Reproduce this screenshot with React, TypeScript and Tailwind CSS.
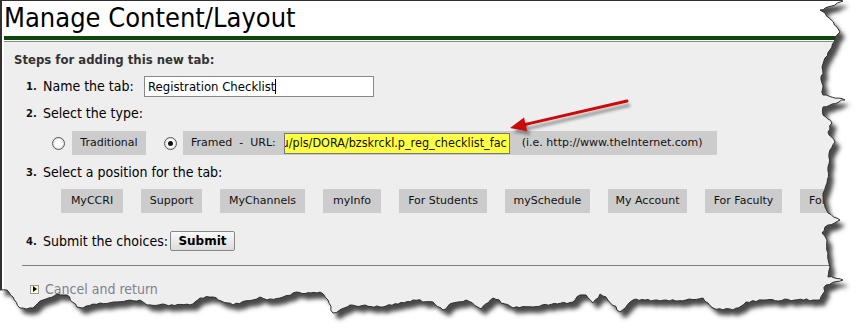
import React from "react";

const F = { fontFamily: '"DejaVu Sans Condensed", "DejaVu Sans", sans-serif' };
const V = { fontFamily: '"DejaVu Sans", sans-serif' };

const pts: [number, number][] = [
  [0, 0], [840, 0], [843, 1], [820, 10], [825, 13], [837, 27], [840, 32], [835, 38], [830, 50], [825, 58], [822, 67], [822, 83], [823, 95], [845, 100], [823, 107], [823, 115], [832, 123], [828, 132], [835, 142], [830, 150], [828, 167], [827, 183], [823, 197], [825, 207], [828, 213], [840, 220], [825, 227], [822, 233], [827, 240], [828, 253], [830, 267], [828, 277], [843, 280], [826, 285], [820, 300], [813, 300], [766, 300], [746, 302], [733, 310], [713, 308], [703, 298], [686, 300], [666, 300], [633, 300], [620, 312], [606, 297], [600, 294], [593, 303], [586, 295], [580, 295], [573, 302], [533, 307], [513, 308], [493, 298], [481, 309], [466, 300], [453, 303], [443, 310], [433, 302], [413, 300], [383, 307], [350, 305], [333, 313], [328, 300], [320, 292], [293, 293], [283, 297], [267, 300], [260, 297], [253, 300], [233, 305], [213, 297], [200, 298], [190, 305], [147, 305], [140, 300], [117, 302], [100, 303], [83, 308], [77, 307], [67, 295], [57, 294], [43, 300], [33, 308], [20, 308], [13, 297], [7, 290], [0, 290],
];

function buildPath(): string {
  let seed = 7;
  const rnd = () => {
    seed = (seed * 9301 + 49297) % 233280;
    return seed / 233280 - 0.5;
  };
  const out: string[] = [];
  for (let i = 0; i < pts.length; i++) {
    const [x1, y1] = pts[i];
    const [x2, y2] = pts[(i + 1) % pts.length];
    out.push(`${x1},${y1}`);
    const len = Math.hypot(x2 - x1, y2 - y1);
    const onBorder = (y1 === 0 && y2 === 0) || (x1 === 0 && x2 === 0);
    if (onBorder) continue;
    const steps = Math.floor(len / 3);
    for (let s = 1; s < steps; s++) {
      const t = s / steps;
      const nx = -(y2 - y1) / len;
      const ny = (x2 - x1) / len;
      const j = rnd() * 2.2;
      out.push(`${(x1 + (x2 - x1) * t + nx * j).toFixed(1)},${(y1 + (y2 - y1) * t + ny * j).toFixed(1)}`);
    }
  }
  return "M" + out.join(" L") + " Z";
}

const P = buildPath();

function TornOverlay() {
  return (
    <svg className="absolute left-0 top-0 pointer-events-none" width="866" height="336" viewBox="0 0 866 336">
      <defs>
        <filter id="blur" x="-10%" y="-10%" width="120%" height="120%">
          <feGaussianBlur stdDeviation="2.2" />
        </filter>
        <mask id="outside">
          <rect x="0" y="0" width="866" height="336" fill="white" />
          <path d={P} fill="black" />
        </mask>
      </defs>
      <path d={`M0,0 H866 V336 H0 Z ${P}`} fill="#ffffff" fillRule="evenodd" />
      <g mask="url(#outside)">
        <path d={P} transform="translate(5,6)" fill="#4a4a4a" filter="url(#blur)" />
      </g>
      <path d={P} fill="none" stroke="#2e2e2e" strokeWidth="1" />
    </svg>
  );
}

function Arrow() {
  const tip = [510, 128];
  const tail = [627, 101];
  const dx = tail[0] - tip[0];
  const dy = tail[1] - tip[1];
  const L = Math.hypot(dx, dy);
  const ux = dx / L;
  const uy = dy / L;
  const bx = tip[0] + ux * 16;
  const by = tip[1] + uy * 16;
  const nx = -uy;
  const ny = ux;
  const head = `M${tip[0]},${tip[1]} L${bx + nx * 7},${by + ny * 7} L${bx - nx * 7},${by - ny * 7} Z`;
  const shaft = `M${tail[0]},${tail[1]} L${bx},${by}`;
  return (
    <svg className="absolute left-0 top-0 pointer-events-none" width="866" height="336" viewBox="0 0 866 336">
      <defs>
        <filter id="ablur" x="-20%" y="-50%" width="140%" height="200%">
          <feGaussianBlur stdDeviation="1.8" />
        </filter>
      </defs>
      <g transform="translate(3,4)" filter="url(#ablur)" opacity="0.6">
        <path d={shaft} stroke="#555" strokeWidth="3" />
        <path d={head} fill="#555" />
      </g>
      <path d={shaft} stroke="#cc0a0a" strokeWidth="3" strokeLinecap="round" />
      <path d={head} fill="#cc0a0a" />
    </svg>
  );
}

function Num({ n }: { n: string }) {
  return (
    <span className="inline-block w-[17px] text-[10px] font-bold text-[#111]" style={V}>
      {n}
    </span>
  );
}

function Radio({ checked }: { checked?: boolean }) {
  return (
    <div className="w-[13px] h-[13px] rounded-full border border-[#555] bg-white flex items-center justify-center shadow-[inset_0_0_0_1px_#ddd]">
      {checked && <div className="w-[5px] h-[5px] rounded-full bg-[#111]" />}
    </div>
  );
}

const positions: [string, number][] = [
  ["MyCCRI", 62],
  ["Support", 61],
  ["MyChannels", 85],
  ["myInfo", 58],
  ["For Students", 88],
  ["mySchedule", 85],
  ["My Account", 79],
  ["For Faculty", 77],
];

export default function App() {
  return (
    <div className="relative w-[866px] h-[336px] bg-white overflow-hidden text-black" style={F}>
      <div className="h-[336px] border-l-2 border-t border-[#333] flex flex-col">
        <div className="h-[35px] pl-[2px] text-[27px] leading-[33px] text-black">Manage Content/Layout</div>
        <div className="ml-[2px] h-[4px] bg-[#0b460b]" />
        <div className="ml-[2px] h-[1px] bg-white" />
        <div className="ml-[2px] h-[1px] bg-[#8a8a8a]" />
        <div className="ml-[2px] flex-1 bg-[#eeeeee] flex flex-col">
          <div className="pt-[10px] pl-[10px] text-[13px] leading-[16px] font-bold text-[#333]">Steps for adding this new tab:</div>

          <div className="mt-[8px] pl-[22px] flex items-center h-[21px]">
            <Num n="1." />
            <span className="w-[101px] text-[14px]">Name the tab:</span>
            <div className="w-[230px] h-[21px] bg-white border border-[#888] flex items-center pl-[3px] text-[13px]">
              Registration Checklist<span className="inline-block w-[1px] h-[15px] bg-black" />
            </div>
          </div>

          <div className="mt-[8px] pl-[22px] flex items-center h-[17px]">
            <Num n="2." />
            <span className="text-[14px]">Select the type:</span>
          </div>

          <div className="mt-[9px] pl-[48px] flex items-center h-[24px]">
            <Radio />
            <div className="ml-[7px] w-[74px] h-[24px] bg-[#cccccc] flex items-center justify-center text-[11px] text-[#111]" style={V}>Traditional</div>
            <div className="ml-[18px]">
              <Radio checked />
            </div>
            <div className="ml-[6px] w-[534px] h-[24px] bg-[#cccccc] flex items-center text-[11px] text-[#111] whitespace-nowrap" style={V}>
              <span className="ml-[8px] whitespace-pre">Framed  -  URL:</span>
              <div className="ml-[8px] w-[226px] h-[21px] bg-[#ffff44] border border-[#777] flex justify-end items-center overflow-hidden text-[12.5px] pr-[2px]" style={F}>
                <span className="shrink-0">www.ccri.edu/pls/DORA/bzskrckl.p_reg_checklist_fac</span>
              </div>
              <span className="ml-[12px]">(i.e. http://www.theInternet.com)</span>
            </div>
          </div>

          <div className="mt-[9px] pl-[22px] flex items-center h-[17px]">
            <Num n="3." />
            <span className="text-[14px]">Select a position for the tab:</span>
          </div>

          <div className="mt-[8px] pl-[57px] flex items-center gap-[18px] h-[24px] whitespace-nowrap" style={V}>
            {positions.map(([label, w]) => (
              <div key={label} className="h-[24px] bg-[#cccccc] flex items-center justify-center text-[11px] text-[#111] shrink-0" style={{ width: w }}>
                {label}
              </div>
            ))}
            <div className="h-[24px] w-[80px] bg-[#cccccc] flex items-center pl-[9px] text-[11px] text-[#111] shrink-0">For Staff</div>
          </div>

          <div className="mt-[18px] pl-[22px] flex items-center h-[20px]">
            <Num n="4." />
            <span className="text-[14px]">Submit the choices:</span>
            <div className="ml-[2px] w-[65px] h-[20px] border border-[#888] rounded-[2px] bg-gradient-to-b from-[#fafafa] to-[#dcdcdc] flex items-center justify-center text-[12px] font-bold" style={V}>
              Submit
            </div>
          </div>

          <div className="mt-[14px] ml-[18px] h-[1px] bg-[#808080]" />

          <div className="mt-[15px] pl-[26px] flex items-center h-[16px]">
            <div className="w-[9px] h-[9px] border border-[#999] bg-[#ffffc8] flex items-center justify-center">
              <div className="w-0 h-0 border-y-[3px] border-y-transparent border-l-[4px] border-l-black" />
            </div>
            <span className="ml-[6px] text-[14px] text-[#80808e]">Cancel and return</span>
          </div>
        </div>
      </div>
      <Arrow />
      <TornOverlay />
    </div>
  );
}
